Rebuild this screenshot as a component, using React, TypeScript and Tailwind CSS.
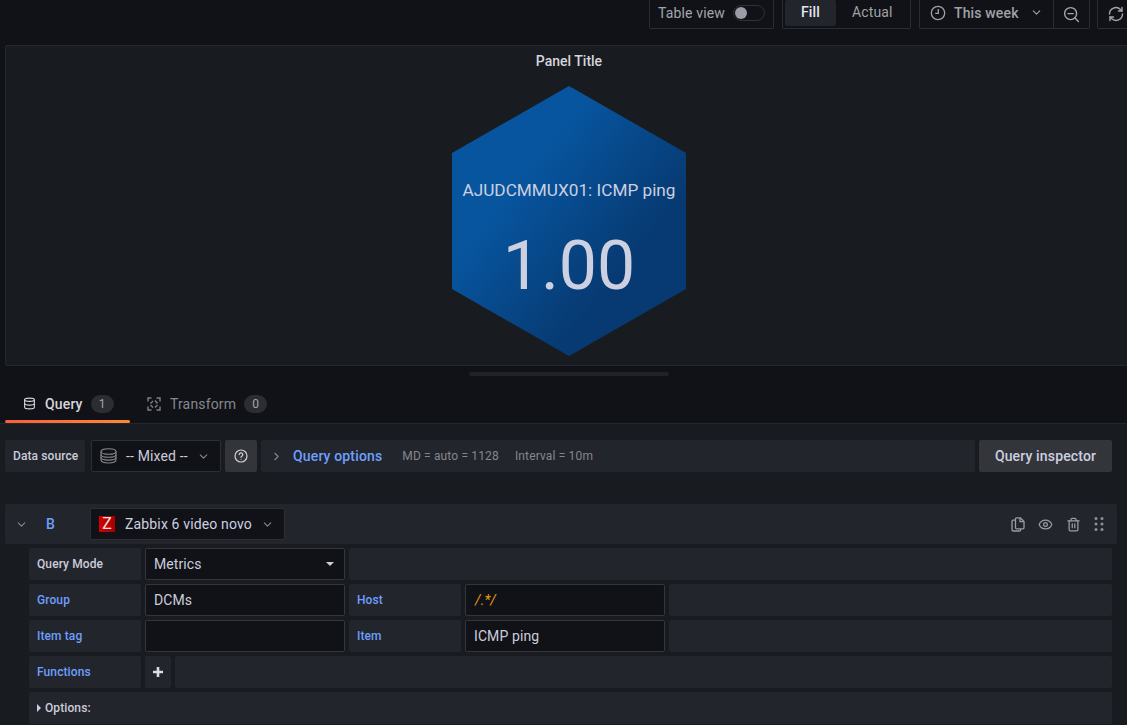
import React from "react";
import { Database, ChevronDown, ChevronRight, Eye, Trash2 } from "lucide-react";

function Clock() {
  return (
    <svg width="16" height="16" viewBox="0 0 16 16" fill="none" stroke="#9fa1a8" strokeWidth="1.3">
      <circle cx="8" cy="8" r="6.7" />
      <path d="M8.3 4v4.4H5.2" />
    </svg>
  );
}
function ZoomOut() {
  return (
    <svg width="17" height="17" viewBox="0 0 17 17" fill="none" stroke="#a4a6ad" strokeWidth="1.4" strokeLinecap="round">
      <circle cx="7.6" cy="7.6" r="6" />
      <path d="M5 7.6h5.2M12 12l3.4 3.4" />
    </svg>
  );
}
function Sync() {
  return (
    <svg width="16" height="16" viewBox="0 0 16 16" fill="none" stroke="#a4a6ad" strokeWidth="1.4" strokeLinecap="round" strokeLinejoin="round">
      <path d="M1.5 8a6.5 6.5 0 0 1 11-4.6L14 5M14.5 8a6.5 6.5 0 0 1-11 4.6L2 11" />
      <path d="M14 1.5V5h-3.5M2 14.5V11h3.5" />
    </svg>
  );
}
function TransformIcon() {
  return (
    <svg width="14" height="14" viewBox="0 0 14 14" fill="none" stroke="#7e8087" strokeWidth="1.4">
      <path d="M1 4.5V1h3.5M9.5 1H13v3.5M13 9.5V13H9.5M4.5 13H1V9.5" />
      <path d="M3.5 6.5L6 4M8 3.5l2.5 3M10.5 8L8 10.5M6 10.5L3.5 8" />
    </svg>
  );
}
function Stack() {
  return (
    <svg width="17" height="16" viewBox="0 0 17 16" fill="none" stroke="#85878d" strokeWidth="1.1">
      <ellipse cx="8.5" cy="3.5" rx="7.5" ry="2.8" />
      <path d="M1 3.5v8.6c0 1.6 3.4 2.9 7.5 2.9s7.5-1.3 7.5-2.9V3.5" />
      <path d="M1 6.4c0 1.6 3.4 2.8 7.5 2.8s7.5-1.2 7.5-2.8M1 9.3c0 1.6 3.4 2.8 7.5 2.8s7.5-1.2 7.5-2.8" />
    </svg>
  );
}
function Help() {
  return (
    <svg width="14" height="14" viewBox="0 0 14 14" fill="none" stroke="#d0d1d6" strokeWidth="1.2">
      <circle cx="7" cy="7" r="6" />
      <path d="M5.2 5.6a1.8 1.8 0 1 1 2.6 1.6c-.5.3-.8.6-.8 1.1" strokeLinecap="round" />
      <circle cx="7" cy="10.2" r=".5" fill="#d0d1d6" stroke="none" />
    </svg>
  );
}
function CopyDoc() {
  return (
    <svg width="14" height="15" viewBox="0 0 14 15" fill="none" stroke="#9a9ca3" strokeWidth="1.3" strokeLinejoin="round">
      <path d="M4.5 3.2H2.2A1.2 1.2 0 0 0 1 4.4v8.4A1.2 1.2 0 0 0 2.2 14h6.2a1.2 1.2 0 0 0 1.2-1.2V12" />
      <path d="M4.5 1.8A1 1 0 0 1 5.5.8h3.8L13 4.5v6.3a1 1 0 0 1-1 1H5.5a1 1 0 0 1-1-1z" />
      <path d="M9 1v3.7h3.8" />
    </svg>
  );
}
function Drag() {
  return (
    <svg width="10" height="14" viewBox="0 0 10 14" fill="#8e9097">
      {[1.5, 7, 12.5].map((y) => (
        <React.Fragment key={y}>
          <circle cx="2" cy={y} r="1.5" />
          <circle cx="8" cy={y} r="1.5" />
        </React.Fragment>
      ))}
    </svg>
  );
}
function Label({ children, blue, width = "w-[112px]" }: { children: React.ReactNode; blue?: boolean; width?: string }) {
  return (
    <div className={`${width} h-8 shrink-0 flex items-center px-2 rounded-xs bg-[#22252b] text-xs font-medium tracking-[0.1px] whitespace-nowrap ${blue ? "text-[#6e9fff]" : "text-[#ccccdc]"}`}>
      {children}
    </div>
  );
}
function Field({ children, orange }: { children?: React.ReactNode; orange?: boolean }) {
  return (
    <div className={`w-[200px] h-8 shrink-0 flex items-center pr-2 rounded-xs bg-[#111217] border border-[#34363c] text-sm tracking-[0.1px] ${orange ? "pl-[9px] text-[#e89a0c] italic" : "pl-2 text-[#ccccdc]"}`}>
      {children}
    </div>
  );
}
const Fill = () => <div className="flex-1 h-8 rounded-xs bg-[#22252b]" />;

export default function App() {
  return (
    <div className="w-[1127px] h-[725px] overflow-hidden bg-[#111217] text-[#ccccdc] flex flex-col" style={{ fontFamily: "Roboto, sans-serif" }}>
      <div className="h-[45px] shrink-0 flex items-start pl-[649px] text-sm tracking-[0.15px]">
        <div className="w-[125px] shrink-0 h-[29px] flex items-center pl-2 pb-[2px] gap-2 border border-t-0 border-[#2a2c31] rounded-b-xs text-[#a3a5ac]">
          <span>Table view</span>
          <div className="w-8 h-4 rounded-full border border-[#2f3136] flex items-center pl-[1px]">
            <div className="w-3 h-3 rounded-full bg-[#9d9ca6]" />
          </div>
        </div>
        <div className="ml-2 w-[129px] shrink-0 h-[29px] flex items-start pl-[2px] border border-t-0 border-[#2a2c31] rounded-b-xs font-medium">
          <div className="w-[51px] h-[26px] flex items-center justify-center pb-[2px] bg-[#22252b] rounded-xs text-[#e6e6ee]">Fill</div>
          <div className="ml-4 h-[26px] flex items-center pb-[2px] font-normal text-[#9fa1a8]">Actual</div>
        </div>
        <div className="ml-2 w-[171px] shrink-0 h-[29px] flex items-center border border-t-0 border-[#2a2c31] rounded-b-xs">
          <div className="w-[134px] shrink-0 h-full flex items-center pl-[10px] pb-[3px] border-r border-[#2a2c31]">
            <Clock />
            <span className="ml-2 font-medium text-[#9fa1a8]">This week</span>
            <ChevronDown size={13} className="ml-[11px] text-[#9fa1a8]" />
          </div>
          <div className="flex-1 flex items-center justify-center"><ZoomOut /></div>
        </div>
        <div className="ml-[7px] w-[40px] shrink-0 h-[29px] flex items-center pl-[10px] border border-t-0 border-[#2a2c31] rounded-b-xs">
          <Sync />
        </div>
      </div>

      <div className="ml-[5px] w-[1128px] h-[321px] shrink-0 flex flex-col items-center bg-[#181b1f] border border-[#25272c] rounded-xs">
        <div className="h-[30px] pt-[6px] text-sm font-medium leading-[18px] text-[#d5d6de]">Panel Title</div>
        <div className="relative mt-[10px] w-[236px] h-[270px]">
          <svg width="236" height="270" viewBox="0 0 236 270" className="block">
            <defs>
              <linearGradient id="hx" x1="0.1" y1="0.1" x2="0.9" y2="0.85">
                <stop offset="0.28" stopColor="#07559f" />
                <stop offset="0.78" stopColor="#073a72" />
              </linearGradient>
            </defs>
            <polygon points="118,0 235,67 235,203 118,270 1,203 1,67" fill="url(#hx)" />
          </svg>
          <div className="absolute inset-x-0 top-[94px] text-center text-[17.2px] leading-5 text-[#ccd0e0] whitespace-nowrap">AJUDCMMUX01: ICMP ping</div>
          <div className="absolute inset-x-0 top-[140px] text-center text-[68px] leading-[80px] font-normal text-[#ccd0e0]">1.00</div>
        </div>
      </div>

      <div className="h-[21px] shrink-0 flex justify-center items-start pt-[6px] pl-[11px]">
        <div className="w-[200px] h-1 rounded-full bg-[#202226]" />
      </div>

      <div className="h-[37px] shrink-0 flex items-stretch pl-[5px] border-b border-[#25272c] text-sm tracking-[0.15px]">
        <div className="w-[125px] relative flex items-center pl-[18px] pb-[3px]">
          <Database size={13} className="text-[#d5d6de]" />
          <span className="ml-[9px] font-medium text-[#d5d6de]">Query</span>
          <span className="ml-[8px] w-[23px] h-[18px] rounded-full bg-[#2b2d33] flex items-center justify-center text-xs text-[#a3a5ac]">1</span>
          <div className="absolute left-0 right-0 bottom-0 h-[3px] rounded-xs bg-gradient-to-r from-[#f55f3e] to-[#ff8833]" />
        </div>
        <div className="flex items-center ml-[17px] pb-[3px] text-[#85878e]">
          <TransformIcon />
          <span className="ml-[9px]">Transform</span>
          <span className="ml-[8px] w-[23px] h-[18px] rounded-full bg-[#2b2d33] flex items-center justify-center text-xs text-[#a3a5ac]">0</span>
        </div>
      </div>

      <div className="flex-1 bg-[#181b1f] pl-[5px] pt-4">
        <div className="h-8 flex items-center text-sm tracking-[0.15px]">
          <Label width="w-[80px]">Data source</Label>
          <div className="ml-[6px] w-[130px] shrink-0 h-8 flex items-center pl-2 rounded-xs bg-[#111217] border border-[#2d2f35]">
            <Stack />
            <span className="ml-[9px] text-[#ccccdc]">-- Mixed --</span>
            <ChevronDown size={13} className="ml-[9px] text-[#85878e]" />
          </div>
          <div className="ml-1 w-8 h-8 shrink-0 flex items-center justify-center rounded-xs bg-[#33353b]"><Help /></div>
          <div className="ml-1 w-[714px] h-8 shrink-0 flex items-center pl-[9px] rounded-xs bg-[#22252b]">
            <ChevronRight size={13} className="text-[#85878e]" />
            <span className="ml-[10px] pb-[1px] font-medium text-[#6e9fff]">Query options</span>
            <span className="ml-5 text-xs text-[#85878e]">MD = auto = 1128</span>
            <span className="ml-4 text-xs text-[#85878e]">Interval = 10m</span>
          </div>
          <div className="ml-1 w-[133px] h-8 shrink-0 flex items-center justify-center pb-[1px] rounded-xs bg-[#33353b] font-medium text-[#ccd0e0]">Query inspector</div>
        </div>

        <div className="mt-8 w-[1112px] h-10 flex items-center rounded-xs bg-[#22252b] text-sm tracking-[0.15px]">
          <ChevronDown size={13} className="ml-[10px] shrink-0 text-[#85878e]" />
          <span className="ml-[18px] w-[9px] font-medium text-[#6e9fff]">B</span>
          <div className="ml-[35px] w-[195px] shrink-0 h-8 flex items-center pl-2 rounded-xs bg-[#111217] border border-[#2d2f35]">
            <span className="w-4 h-4 bg-gradient-to-r from-[#d10000] to-[#a80000] flex items-center justify-center text-[16px] leading-none font-normal text-[#f0e0e0]">Z</span>
            <span className="ml-[10px] text-[#ccd0e0]">Zabbix 6 video novo</span>
            <ChevronDown size={13} className="ml-[9px] text-[#85878e]" />
          </div>
          <div className="ml-auto flex items-center gap-[13px] pr-[13px] text-[#9a9ca3]">
            <CopyDoc />
            <Eye size={15} />
            <Trash2 size={15} />
            <Drag />
          </div>
        </div>

        <div className="mt-1 ml-6 w-[1083px] flex flex-col gap-1">
          <div className="flex gap-1">
            <Label>Query Mode</Label>
            <div className="w-[200px] h-8 shrink-0 flex items-center justify-between pl-2 pr-[10px] rounded-xs bg-[#111217] border border-[#34363c] text-sm tracking-[0.1px]">
              <span>Metrics</span>
              <span className="w-0 h-0 border-x-[4px] border-x-transparent border-t-[4px] border-t-[#ccccdc]" />
            </div>
            <Fill />
          </div>
          <div className="flex gap-1">
            <Label blue>Group</Label>
            <Field>DCMs</Field>
            <Label blue>Host</Label>
            <Field orange>/.*/</Field>
            <Fill />
          </div>
          <div className="flex gap-1">
            <Label blue>Item tag</Label>
            <Field />
            <Label blue>Item</Label>
            <Field>ICMP ping</Field>
            <Fill />
          </div>
          <div className="flex gap-1">
            <Label blue>Functions</Label>
            <div className="w-[26px] h-8 shrink-0 flex items-center justify-center rounded-xs bg-[#22252b] text-[#dcdde3]">
              <svg width="10" height="10" viewBox="0 0 10 10" fill="currentColor">
                <path d="M3.7 0h2.6v3.7H10v2.6H6.3V10H3.7V6.3H0V3.7h3.7z" />
              </svg>
            </div>
            <Fill />
          </div>
          <div className="h-8 flex items-center pl-2 rounded-xs bg-[#22252b] text-xs font-medium tracking-[0.1px] text-[#ccccdc]">
            <span className="w-0 h-0 border-y-[4px] border-y-transparent border-l-[4px] border-l-[#ccccdc]" />
            <span className="ml-[4px]">Options:</span>
          </div>
        </div>
      </div>
    </div>
  );
}
